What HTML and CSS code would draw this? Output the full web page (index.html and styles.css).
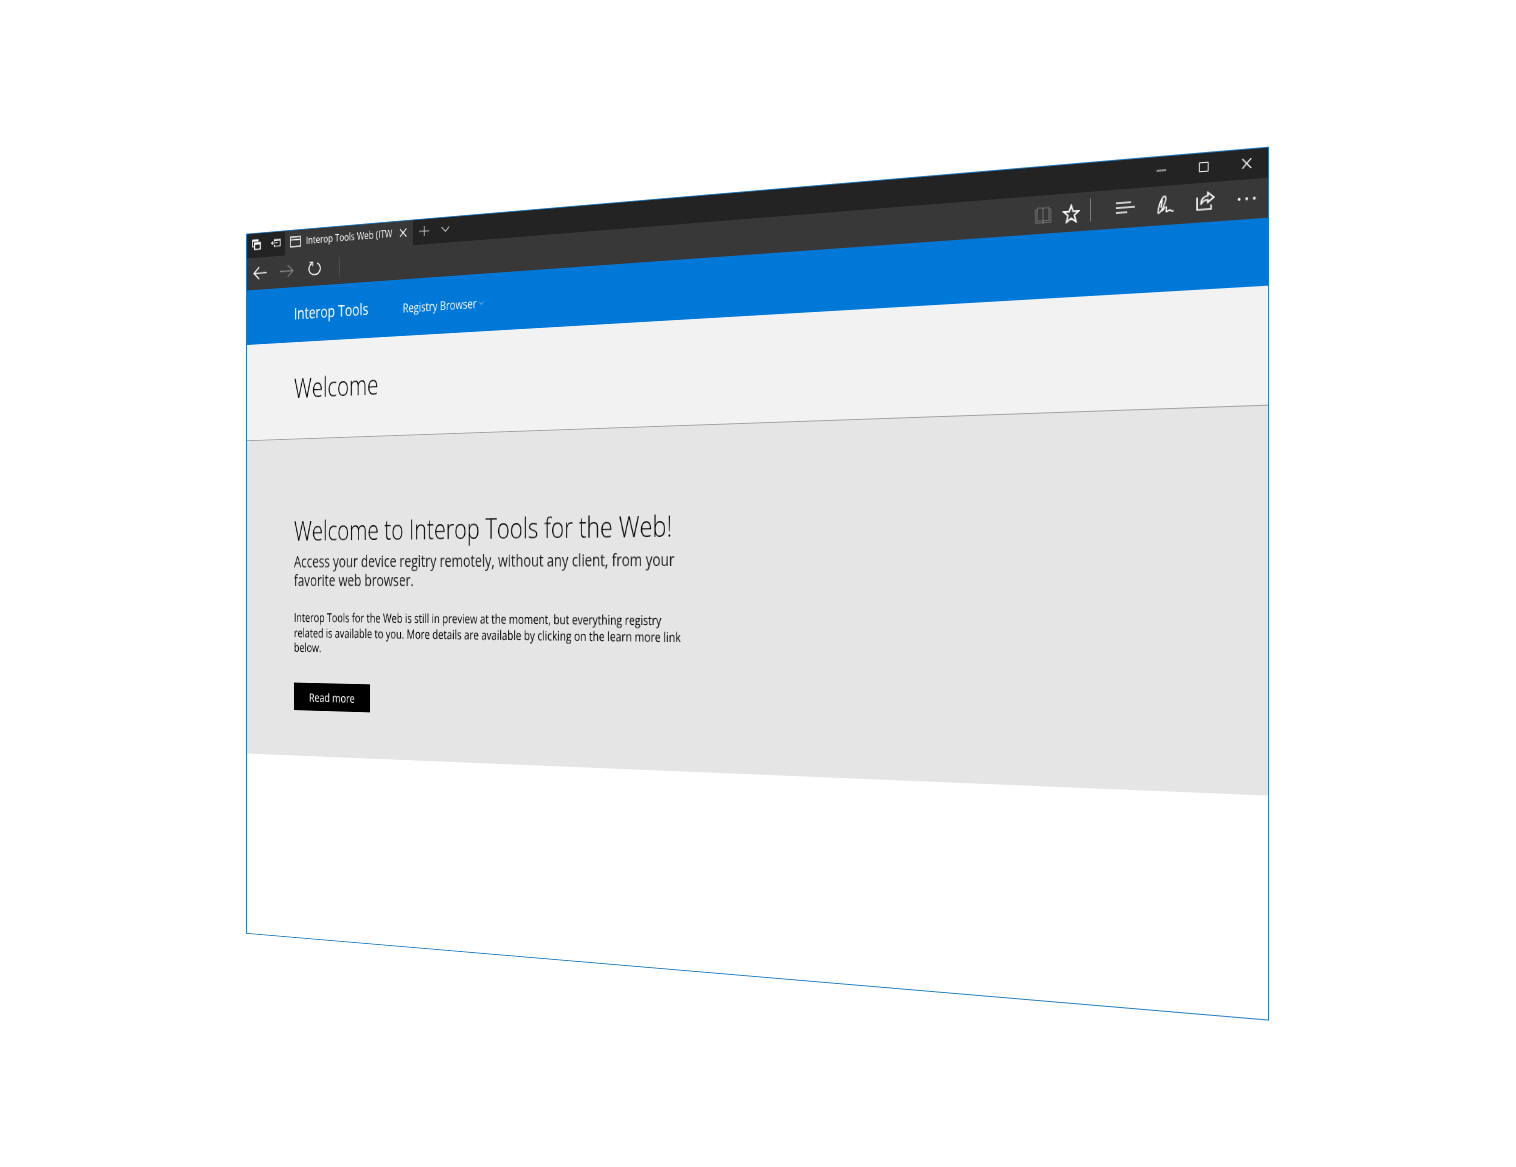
FILE: index.html
```html
<!DOCTYPE html>
<html lang="en">
<head>
<meta charset="utf-8">
<title>Interop Tools Web</title>
<link rel="stylesheet" href="styles.css">
</head>
<body>
<div class="window">
  <div class="titlebar">
    <svg class="ic tabs-aside" preserveAspectRatio="none" viewBox="0 0 16 14"><path d="M3 9H1V1h9v2M1 2h9M4.500 4.500h9v8h-9zM4.500 6h9" stroke-width="1.500"/></svg>
    <svg class="ic set-aside" preserveAspectRatio="none" viewBox="0 0 16 14"><path d="M6 4V1.500h9v10H6V9M6 3h9M1 6.500h10M4 4L1 6.500 4 9"/></svg>
    <div class="tab">
      <svg class="ic page" preserveAspectRatio="none" viewBox="0 0 18 14"><path d="M1 1h16v12H1zM1 4.500h16" stroke-width="1.300"/></svg>
      <span class="tab-title"><span class="fit fit-tab">Interop Tools Web (ITW)</span></span>
      <svg class="ic tab-close" preserveAspectRatio="none" viewBox="0 0 12 10"><path d="M1 0l10 10M11 0L1 10"/></svg>
    </div>
    <svg class="ic plus" viewBox="0 0 16 12"><path d="M8 0v12M0 6h16"/></svg>
    <svg class="ic chev" viewBox="0 0 14 8"><path d="M1 1l6 5.500L13 1"/></svg>
    <div class="caption">
      <svg class="ic" viewBox="0 0 11 10"><path d="M0 5h11"/></svg>
      <svg class="ic" viewBox="0 0 11 10"><path d="M.5.5h10v9H.5z"/></svg>
      <svg class="ic" viewBox="0 0 11 10"><path d="M.5 0l10 10M10.500 0L.5 10" stroke-width="1.200"/></svg>
    </div>
  </div>
  <div class="toolbar">
    <div class="nav-buttons">
      <svg class="ic" viewBox="0 0 22 16"><path d="M22 8H1.500M10 1L1.500 8l8.500 7" stroke-width="1.600"/></svg>
      <svg class="ic dim" viewBox="0 0 22 16"><path d="M0 8h20.500M12 1l8.500 7-8.500 7"/></svg>
      <svg class="ic reload" preserveAspectRatio="none" viewBox="0 0 22 18"><path d="M14.500 2.200a9 7.500 0 1 1-8 .3M2.500 1.200H8V6" stroke-width="1.600"/></svg>
    </div>
    <i class="rule"></i>
    <div class="tools">
      <svg class="ic book" preserveAspectRatio="none" viewBox="0 0 20 18"><path d="M3 3H.8v13.500H9l1 .8 1-.8h8.200V3H17M3 1h6l1 1 1-1h6v13.500h-6l-1 1-1-1H3zM10 2v13"/></svg>
      <svg class="ic star" viewBox="0 0 20 19"><path d="M10 1.500l2.200 6h6.300l-5 4 2 6.500-5.500-3.800L4.500 18l2-6.500-5-4h6.300z" stroke-width="1.600"/></svg>
      <i class="rule"></i>
      <svg class="ic hub" preserveAspectRatio="none" viewBox="0 0 20 14"><path d="M0 2h16M0 7h20M0 12h12" stroke-width="1.500"/></svg>
      <svg class="ic pen" preserveAspectRatio="none" viewBox="0 0 20 20"><path d="M1.500 18.500L2.500 13C4 7.500 6 2 9 1.500c2.500 0 2 3 1 5.500C8.500 11 6.500 15 4 17.500c-1 .8-2 1-2.500 1M6.500 4.500L5 13M6 16.500c2-1.500 3.500-4.500 5.200-3.800 1.300.8-1.200 4.800.3 4.800s2.500-2 4-1.500 1 2 4 1" stroke-width="1.500"/></svg>
      <svg class="ic share" preserveAspectRatio="none" viewBox="0 0 20 19"><path d="M1 5.500V18h15v-4.500M12.500 1.200l6.500 5-6.500 5V8.500C9 8.500 6.500 10 5 13c0-5 3-8.500 7.500-8.500z" stroke-width="1.600"/></svg>
      <svg class="ic more" viewBox="0 0 20 4"><g fill="#fff" stroke="none"><circle cx="2" cy="2" r="1.400"/><circle cx="10" cy="2" r="1.400"/><circle cx="18" cy="2" r="1.400"/></g></svg>
    </div>
  </div>
  <nav class="site-nav">
    <span class="brand"><span class="fit fit-brand">Interop Tools</span></span>
    <span class="menu"><span class="fit fit-menu">Registry Browser</span></span>
    <svg class="ic menu-chev" viewBox="0 0 7 4"><path d="M.5.5l3 2.500 3-2.500"/></svg>
  </nav>
  <header class="page-head"><h1><span class="fit fit-h">Welcome</span></h1></header>
  <main class="hero">
    <h2><span class="fit fit-h2">Welcome to Interop Tools for the Web!</span></h2>
    <p class="lead"><span class="fit fit-lead">Access your device regitry remotely, without any client, from your<br>favorite web browser.</span></p>
    <p class="copy"><span class="fit fit-copy">Interop Tools for the Web is still in preview at the moment, but everything registry<br>related is available to you. More details are available by clicking on the learn more link<br>below.</span></p>
    <a class="button"><span class="fit fit-btn">Read more</span></a>
  </main>
</div>
</body>
</html>
```
FILE: styles.css
```css
* { box-sizing: border-box; }
html, body { margin: 0; height: 100%; overflow: hidden; background: #fff; }
body { font-family: "Open Sans", "Noto Sans", sans-serif; color: #000; }

/* The window is laid out flat, then tilted in perspective. */
.window {
  position: relative;
  width: 1400px;
  height: 874px;
  background: #fff;
  outline: 2px solid rgba(255, 255, 255, .01);
  transform-origin: 0 0;
  transform: matrix3d(.550258, -.0830468, 0, -.000142204, 0, .800915, 0, 0, 0, 0, 1, 0, 246, 233.7, 0, 1);
}
.window::after {
  content: "";
  position: absolute;
  inset: 0;
  border: 1px solid #1f7cc4;
  border-left-width: 2px;
}
.ic { display: block; flex: none; fill: none; stroke: #fff; stroke-width: 1.2; }
.fit { display: inline-block; white-space: nowrap; transform-origin: 0 50%; }

.titlebar { display: flex; align-items: center; height: 31px; padding-bottom: 2px; background: #232323; }
.tabs-aside { width: 17px; height: 14px; margin-left: 10px; }
.set-aside { width: 17px; height: 12px; margin-left: 15px; }
.tab { display: flex; align-items: center; width: 208px; height: 31px; margin: 0 0 -2px 7px; padding: 0 0 2px 8px; background: #383838; }
.page { width: 19px; height: 14px; }
.tab-title { width: 141px; margin-left: 8px; overflow: hidden; color: #fff; font-size: 12px; line-height: 20px; white-space: nowrap; }
.tab-close { width: 13px; height: 10px; margin-left: 10px; }
.plus { width: 16px; height: 12px; margin-left: 10px; stroke: #ccc; }
.chev { width: 14px; height: 8px; margin-left: 18px; stroke: #ccc; }
.caption { display: flex; gap: 37px; margin-left: auto; padding-right: 19px; }
.caption .ic { width: 11px; height: 10px; stroke-width: 1; }

.toolbar { display: flex; align-items: center; height: 40px; padding: 0 0 2px 12px; background: #383838; }
.nav-buttons { display: flex; align-items: center; gap: 23px; }
.nav-buttons .ic { width: 23px; height: 17px; }
.nav-buttons .reload { height: 18px; }
.nav-buttons .dim { stroke: #8a8a8a; }
.rule { width: 1px; height: 24px; background: #8a8a8a; }
.nav-buttons + .rule { margin-left: 28px; background: #777; }
.tools { display: flex; align-items: center; margin-left: auto; padding-right: 14px; }
.book { width: 20px; height: 18px; margin-top: 3px; stroke: #707070; }
.star { width: 21px; height: 20px; margin: 3px 0 0 13px; }
.tools .rule { margin-left: 12px; }
.hub { width: 22px; height: 14px; margin-left: 29px; }
.pen { width: 20px; height: 20px; margin-left: 25px; }
.share { width: 21px; height: 19px; margin: -1px 0 0 25px; }
.more { width: 21px; height: 5px; margin-left: 25px; }

.site-nav { display: flex; align-items: center; height: 68px; padding: 0 0 1px 81px; background: #0078d7; color: #fff; }
.brand { width: 177px; margin-bottom: 2px; font-size: 20px; }
.menu { width: 119px; font-size: 15px; }
.menu-chev { width: 7px; height: 4px; margin-top: 3px; stroke: #b5d8f5; stroke-width: 1; }

.page-head { display: flex; align-items: center; height: 120px; padding: 0 0 6px 81px; background: #f2f2f2; border-bottom: 1px solid #a0a0a0; }
h1, h2 { margin: 0; font-size: 33px; font-weight: 300; line-height: 40px; }

.hero { height: 390px; padding: 93px 0 0 81px; background: #e5e5e5; }
.lead { margin: 6px 0 0; color: #1a1a1a; font-size: 19.5px; line-height: 23px; }
.copy { margin: 25px 0 0; font-size: 15px; line-height: 18.700px; }
.button { display: block; width: 125px; height: 34px; margin-top: 34px; padding-left: 25px; background: #000; color: #fff; font-size: 15px; line-height: 34px; }

.fit-tab { transform: scaleX(1.08); }
.fit-brand { transform: scaleX(.989); }
.fit-menu { transform: scaleX(.978); }
.fit-h { transform: scaleX(1.007); }
.fit-h2 { transform: scaleX(1.011); }
.fit-lead { transform: scaleX(.982); }
.fit-copy { transform: scaleX(.987); }
.fit-btn { transform: scaleX(.98); }
```
